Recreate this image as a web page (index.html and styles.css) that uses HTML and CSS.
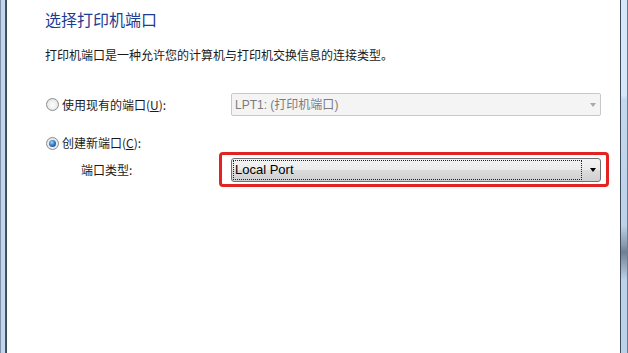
FILE: index.html
```html
<!DOCTYPE html>
<html lang="zh-CN">
<head>
<meta charset="utf-8">
<title>选择打印机端口</title>
<link rel="stylesheet" href="styles.css">
</head>
<body>
<div class="frame">
  <div class="edge-left"></div>
  <main class="content">
    <h1 class="title">选择打印机端口</h1>
    <p class="desc">打印机端口是一种允许您的计算机与打印机交换信息的连接类型。</p>

    <div class="row row-existing">
      <div class="label-col">
        <span class="radio"></span>
        <span class="radio-label">使用现有的端口(<u>U</u>):</span>
      </div>
      <div class="combo combo-disabled">
        <span class="combo-text"><span class="latin">LPT1: (</span>打印机端口<span class="latin">)</span></span>
        <span class="arrow arrow-gray"></span>
      </div>
    </div>

    <div class="row row-new">
      <div class="label-col">
        <span class="radio checked"></span>
        <span class="radio-label">创建新端口(<u>C</u>):</span>
      </div>
    </div>

    <div class="row row-type">
      <div class="label-col indent">
        <span class="type-label">端口类型:</span>
      </div>
      <div class="combo combo-active highlighted">
        <span class="focus"><span class="combo-text latin big">Local Port</span></span>
        <span class="arrow arrow-black"></span>
      </div>
    </div>
  </main>
  <div class="edge-right"></div>
</div>
</body>
</html>
```

FILE: styles.css
```css
html, body {
  margin: 0;
  padding: 0;
  background: #ffffff;
}
body {
  width: 628px;
  height: 353px;
  overflow: hidden;
  font-family: "Noto Sans CJK SC", "Liberation Sans", sans-serif;
  color: #1a1a1a;
}
.frame {
  display: flex;
  width: 628px;
  height: 353px;
}
.edge-left {
  width: 7px;
  flex: none;
  background: linear-gradient(to right,
    #7f90a7 0, #7f90a7 1px,
    #bfd5ee 1px, #c3d8f0 5px,
    #4a596c 5px, #3a4757 7px);
}
.edge-right {
  width: 8px;
  flex: none;
  position: relative;
  background: linear-gradient(to right,
    #3e4b5c 0, #3e4b5c 1px,
    #c6dbf2 1px, #c6dbf2 7px,
    #6b7c93 7px, #6b7c93 8px);
}
.edge-right::after {
  content: "";
  position: absolute;
  left: 1px;
  width: 6px;
  top: 0;
  bottom: 0;
  background: linear-gradient(to bottom,
    #d8e7f8 0, #d8e7f8 95px,
    #c3d7ee 100px, #bdd2ea 225px,
    #8a99ab 245px, #6f7e90 252px, #8e9db0 262px,
    #bcd1ea 280px, #bcd1ea 353px);
}
.content {
  flex: 1;
  padding-left: 38px;
  background: #ffffff;
}
.title {
  margin: 9px 0 0 0;
  font-size: 16px;
  line-height: 20px;
  font-weight: normal;
  color: #1d3d94;
}
.desc {
  margin: 18px 0 0 0;
  font-size: 12px;
  line-height: 16px;
  color: #1a1a1a;
}
.row {
  display: flex;
  align-items: center;
}
.row-existing {
  margin-top: 30px;
  height: 23px;
}
.row-new {
  margin-top: 19px;
  height: 16px;
}
.row-type {
  margin-top: 7px;
  height: 24px;
}
.label-col {
  width: 186px;
  flex: none;
  display: flex;
  align-items: center;
  font-size: 12px;
  line-height: 16px;
}
.label-col.indent {
  padding-left: 36px;
  box-sizing: border-box;
}
.radio {
  position: relative;
  width: 11px;
  height: 11px;
  margin-left: 1px;
  border: 1px solid #8c8d8f;
  border-radius: 50%;
  background: radial-gradient(circle at 50% 55%, #fdfdfd 0, #f0f0f0 45%, #d6d6d6 100%);
  flex: none;
}
.radio.checked::after {
  content: "";
  position: absolute;
  left: 2px;
  top: 2px;
  width: 7px;
  height: 7px;
  border-radius: 50%;
  background: radial-gradient(circle at 40% 35%, #a8dcfa 0, #3a86cc 40%, #1b4f8e 80%, #2a5f9a 100%);
}
.radio-label {
  margin-left: 3px;
}
.combo {
  position: relative;
  width: 370px;
  box-sizing: border-box;
  height: 100%;
  display: flex;
  align-items: center;
  flex: none;
}
.combo-disabled {
  border: 1px solid #c6c8ca;
  border-radius: 2px;
  background: #f4f4f4;
  color: #7c7c7c;
  font-size: 12px;
  line-height: 16px;
  padding-left: 3px;
}
.combo-active {
  border: 1px solid #707070;
  border-radius: 3px;
  background: linear-gradient(to bottom, #f3f3f3 0, #ebebeb 50%, #dcdcdc 50%, #cfcfcf 100%);
  color: #000;
}
.highlighted::after {
  content: "";
  position: absolute;
  left: -13px;
  right: -9px;
  top: -7px;
  bottom: -6px;
  border: 3px solid #e32222;
  border-radius: 4px;
}
.focus {
  position: absolute;
  left: 1px;
  top: 1px;
  bottom: 1px;
  right: 18px;
  border: 1px dotted #222;
  display: flex;
  align-items: center;
  padding-left: 1px;
}
.latin {
  font-family: "Liberation Sans", "Noto Sans CJK SC", sans-serif;
}
.big {
  font-size: 13px;
  line-height: 16px;
}
.arrow {
  position: absolute;
  right: 4px;
  top: 50%;
  margin-top: -2px;
  width: 0;
  height: 0;
  border-left: 3.5px solid transparent;
  border-right: 3.5px solid transparent;
  border-top: 4px solid #000;
}
.arrow-gray {
  border-top-color: #a9a9a9;
}
.arrow-black {
  border-top-color: #000;
}
```
